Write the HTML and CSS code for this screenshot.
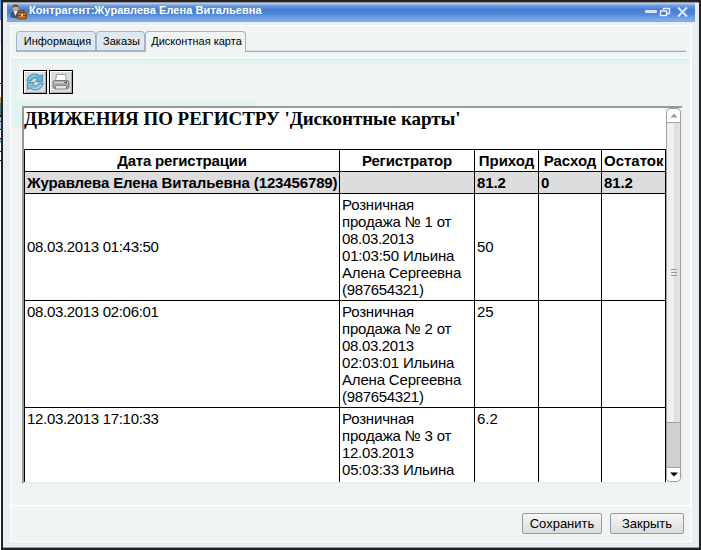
FILE: index.html
```
<!DOCTYPE html>
<html lang="ru">
<head>
<meta charset="utf-8">
<title>Контрагент</title>
<link rel="stylesheet" href="styles.css">
</head>
<body>
<div class="window">
  <header class="titlebar">
    <svg class="person" width="17" height="16" viewBox="0 0 17 16">
      <path d="M0.5 13 Q0 7 4 7 H8 Q11 8 10 14 Q5 15 0.5 13Z" fill="#46546a"/>
      <path d="M3.5 7 L5.5 12 L7.5 7Z" fill="#eef2f8"/>
      <circle cx="5.5" cy="4" r="3" fill="#dca77b"/>
      <path d="M2.3 4 Q2 0.5 5.5 0.5 Q9 0.5 8.7 4 L7.5 2.7 H4Z" fill="#74401c"/>
      <path d="M10 8 V6.5 H14 V8" fill="none" stroke="#6b3d18"/>
      <rect x="7.5" y="8.5" width="9" height="6.5" rx="1" fill="#b5702b" stroke="#7a4215"/>
      <path d="M8 11.5 H16" stroke="#7a4215"/>
      <rect x="11" y="10" width="2" height="2.5" fill="#f4cf6d"/>
    </svg>
    <span class="caption">Контрагент:Журавлева Елена Витальевна</span>
    <svg class="controls" width="46" height="14" viewBox="0 0 46 14">
      <rect x="1" y="5" width="12" height="3" rx="1" fill="#d6e3f8"/>
      <path d="M19.5 3.5 H25.5 V8.5 H23 M19.5 3.5 V5 M19 3.5 H26" fill="none" stroke="#e7effb" stroke-width="1.4"/>
      <rect x="16.5" y="6" width="6" height="4.5" fill="#4779c8" stroke="#f0f5fd" stroke-width="1.4"/>
      <path d="M34 2.5 L43 11.5 M43 2.5 L34 11.5" stroke="#d9e6fa" stroke-width="2"/>
    </svg>
  </header>
  <main class="panel">
    <nav class="tabs">
      <div class="tab t1">Информация</div>
      <div class="tab t2">Заказы</div>
      <div class="tab t3 active">Дисконтная карта</div>
      <div class="rest"></div>
    </nav>
    <section class="content">
      <div class="toolbar">
        <button class="tool" aria-label="Обновить">
          <svg width="20" height="20" viewBox="0 0 20 20">
            <path d="M2 9 Q3 2 10 2 Q13 2 15 4 L17.5 2.5 V9.5 H10.5 L12.5 7 Q8 4.5 6 9Z" fill="#63b3d2" stroke="#3983a6" stroke-width=".8"/>
            <path d="M18 11 Q17 18 10 18 Q7 18 5 16 L2.5 17.5 V10.5 H9.5 L7.5 13 Q12 15.5 14 11Z" fill="#7cc4de" stroke="#3983a6" stroke-width=".8"/>
            <path d="M4 7 Q6 3.5 11 3.5 M8 16.5 Q14 17 16 13" fill="none" stroke="#b1e0ee"/>
          </svg>
        </button>
        <button class="tool" aria-label="Печать">
          <svg width="20" height="20" viewBox="0 0 20 20">
            <path d="M4.5 9 L5.5 2.5 H14.5 L15.5 9Z" fill="#fff" stroke="#9a9a9a"/>
            <rect x="2" y="8.5" width="16" height="8" rx="2" fill="#aaa" stroke="#777"/>
            <path d="M3 10.5 H17" stroke="#d6d6d6"/>
            <path d="M13.5 10.5 H16" stroke="#333"/>
            <path d="M4.5 13.5 H15.5 V17 H4.5Z" fill="#e6e6e6" stroke="#858585"/>
          </svg>
        </button>
      </div>
      <div class="frame">
        <div class="report">
          <h1>ДВИЖЕНИЯ ПО РЕГИСТРУ 'Дисконтные карты'</h1>
          <table>
            <colgroup><col class="c1"><col class="c2"><col class="c3"><col class="c4"><col class="c5"></colgroup>
            <tr><th>Дата регистрации</th><th>Регистратор</th><th>Приход</th><th>Расход</th><th>Остаток</th></tr>
            <tr class="total"><td>Журавлева Елена Витальевна (123456789)</td><td></td><td>81.2</td><td>0</td><td>81.2</td></tr>
            <tr class="middle"><td class="date">08.03.2013 01:43:50</td><td class="doc">Розничная<br>продажа № 1 от<br><span class="num">08.03.2013</span><br>01:03:50 Ильина<br>Алена Сергеевна<br><span class="num">(987654321)</span></td><td>50</td><td></td><td></td></tr>
            <tr><td class="date">08.03.2013 02:06:01</td><td class="doc">Розничная<br>продажа № 2 от<br><span class="num">08.03.2013</span><br>02:03:01 Ильина<br>Алена Сергеевна<br><span class="num">(987654321)</span></td><td>25</td><td></td><td></td></tr>
            <tr><td class="date">12.03.2013 17:10:33</td><td class="doc">Розничная<br>продажа № 3 от<br><span class="num">12.03.2013</span><br>05:03:33 Ильина<br><br></td><td>6.2</td><td></td><td></td></tr>
          </table>
        </div>
        <div class="scroll">
          <div class="arrow up"><svg width="8" height="5" viewBox="0 0 8 5"><path d="M0.5 4.5 L4 0.5 L7.5 4.5Z" fill="#999"/></svg></div>
          <div class="thumb"><i></i><i></i><i></i></div>
          <div class="track"></div>
          <div class="arrow down"><svg width="8" height="5" viewBox="0 0 8 5"><path d="M0 0.5 H8 L4 4.5Z" fill="#000"/></svg></div>
        </div>
      </div>
    </section>
    <footer class="footer">
      <button class="btn save">Сохранить</button>
      <button class="btn close">Закрыть</button>
    </footer>
  </main>
</div>
</body>
</html>
```
FILE: styles.css
```
* { box-sizing: border-box; }
body {
  margin: 0;
  width: 701px;
  height: 550px;
  overflow: hidden;
  padding: 0 0 0 1px;
  background: linear-gradient(#5c93d8 0 20px, #e5edf6 20px 45px, #fff 45px 83px, #111 83px 84px, #fff 84px 97px, #b69a48 97px 103px, #4f8277 103px 115px, #111 115px 117px, #a9c8ed 117px 121px, #222 121px 122px, #a9c8ed 122px 129px, #111 129px 130px, #fff 130px 138px, #111 138px 139px, #7ab8d8 139px 143px, #fff 143px 151px, #111 151px 152px, #fff 152px 160px, #111 160px 161px, #fff 161px);
  font-family: "Liberation Sans", Arial, sans-serif;
  color: #000;
}
.window {
  height: 550px;
  border: 2px solid #222326;
  background: #e9edf4;
  padding: 1px 4px 0;
  box-shadow: inset 0 1px #999, inset 0 -1px #9b9b9f;
}
.titlebar {
  display: flex;
  height: 19px;
  background: linear-gradient(#b5cff2 0, #6598df 3px, #467bcf 7px, #5188d6 11px, #82b1ec 18px, #75a6e5);
}
.person { margin: 1px 0 0 3px; }
.caption {
  flex: 1;
  padding-left: 2px;
  font-size: 11px;
  line-height: 15px;
  font-weight: bold;
  color: #fff;
  white-space: nowrap;
  letter-spacing: 0.06px;
}
.controls { margin: 2px 5px 0 0; }
.panel {
  display: flex;
  flex-direction: column;
  margin: 3px 3px 0;
  height: 517px;
  border: 1px solid #fff;
  background: #f0f4f3;
}
.tabs {
  display: flex;
  height: 31px;
  padding: 5px;
}
.tab {
  height: 21px;
  border: 1px solid #a5b2cc;
  border-bottom: 2px solid #a5b2cc;
  border-radius: 4px 4px 0 0;
  background: #dfe7ef;
  font-size: 11px;
  line-height: 19px;
  text-align: center;
  white-space: nowrap;
}
.t1 { width: 80px; padding-left: 3px; }
.t2 { width: 49px; padding-left: 2px; }
.t3 { width: 101px; padding-left: 2px; }
.tab.active { background: #f0f4f5; border-bottom: 0; }
.rest { flex: 1; border-bottom: 1px solid #9aabca; box-shadow: inset 0 -1px #d5dfed; }
.content {
  height: 448px;
  border-top: 1px solid #fff;
  border-right: 1px solid #fff;
  padding: 6px 7px 0 6px;
  background:
    linear-gradient(#e2f2ef, #e2f2ef) 0 0 / 100% 6px no-repeat,
    linear-gradient(#e2f2ef, #e2f2ef) 0 0 / 6px 70px no-repeat,
    linear-gradient(#e2f2ef, #e2f2ef) 0 42px / 245px 28px no-repeat;
}
.toolbar { display: flex; gap: 2px; height: 42px; padding: 6px; }
.tool {
  display: flex;
  align-items: center;
  justify-content: center;
  width: 24px;
  height: 24px;
  padding: 0;
  border: 1px solid #000;
  background: #dcdcdc;
  box-shadow: inset 1px 1px #fff, inset -1px -1px #aaa;
}
.frame {
  display: flex;
  width: 661px;
  height: 378px;
  margin-left: 5px;
  border: 2px solid;
  border-color: #999 #eee #eee #999;
  background: #fff;
}
.report { width: 642px; height: 374px; overflow: hidden; }
h1 {
  margin: 0;
  height: 41px;
  font: bold 19px/22px "Liberation Serif", "Times New Roman", serif;
  letter-spacing: -0.06px;
  white-space: nowrap;
}
table {
  width: 642px;
  table-layout: fixed;
  border-collapse: collapse;
  font-size: 15px;
  line-height: 17px;
}
.c1 { width: 315px; }
.c2 { width: 135px; }
.c3 { width: 64px; }
.c4 { width: 63px; }
.c5 { width: 64px; }
th, td {
  height: 22px;
  padding: 2px;
  border: 1px solid #000;
  text-align: left;
  vertical-align: top;
  white-space: nowrap;
}
th { text-align: center; letter-spacing: -0.2px; }
th:nth-child(n+3) { letter-spacing: 0; }
.total { background: #ddd; font-weight: bold; letter-spacing: -0.13px; }
.date, .num { letter-spacing: -0.32px; }
.doc { letter-spacing: -0.18px; }
.middle td { vertical-align: middle; }
.middle td:not(.doc) { padding-bottom: 4px; }
.scroll { display: flex; flex-direction: column; width: 15px; height: 374px; }
.arrow {
  display: flex;
  align-items: center;
  justify-content: center;
  height: 15px;
  border: 1px solid #a0a0a0;
  background: #fff;
}
.up { border-radius: 4px 4px 0 0; }
.down { border-radius: 0 0 4px 4px; }
.thumb {
  display: flex;
  flex-direction: column;
  align-items: center;
  justify-content: center;
  gap: 2px;
  height: 299px;
  border: solid #a0a0a0;
  border-width: 0 1px;
  background: linear-gradient(90deg, #f0f0f0 50%, #e1e1e1 50%);
}
.thumb i { width: 6px; height: 1px; background: #999; }
.track { flex: 1; border: 1px solid #a0a0a0; border-bottom: 0; background: #d0d0d0; }
.footer {
  display: flex;
  flex: 1;
  justify-content: flex-end;
  gap: 8px;
  padding: 7px 7px 0 0;
  border-top: 1px solid #fff;
}
.btn {
  height: 21px;
  padding: 0;
  border: 1px solid #999;
  border-radius: 2px;
  background: linear-gradient(#f7f7f7, #dcdcdc);
  font: 13px/18px "Liberation Sans", Arial, sans-serif;
  color: #000;
}
.save { width: 80px; }
.close { width: 74px; }
```
